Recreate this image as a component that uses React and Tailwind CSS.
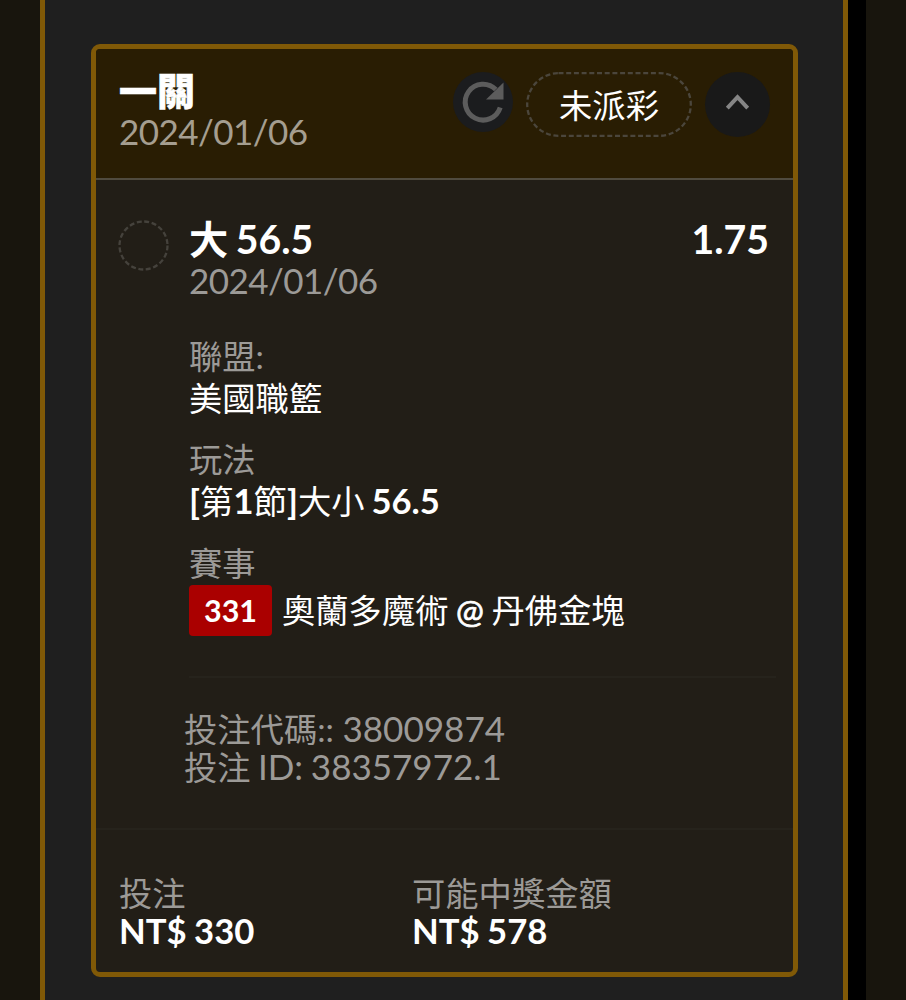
import React from 'react';

const Field = ({ label, children, className = '' }) => (
  <div className={className}>
    <div className="h-[42px] text-[33.3px] leading-[42px] text-[#9c9a97]">{label}</div>
    {children}
  </div>
);

const Amount = ({ label, value, className = '' }) => (
  <div className={className}>
    <div className="h-[38px] text-[33.3px] leading-[38px] text-[#9c9a97]">{label}</div>
    <div className="h-[38px] text-[34.7px] font-bold leading-[38px] [word-spacing:-1px]">{value}</div>
  </div>
);

const RefreshIcon = () => (
  <svg className="h-[60px] w-[60px]" viewBox="0 0 60 60">
    <path d="M47.2 35.5 A17.9 17.9 0 1 1 42.8 17.5" fill="none" stroke="#5c5c5c" strokeWidth="5" />
    <path d="M50.5 10.5 V27.5 H33 Z" fill="#5c5c5c" />
  </svg>
);

const ChevronUp = () => (
  <svg className="h-[65px] w-[65px]" viewBox="0 0 65 65">
    <path d="M22.3 36.2 L32.5 25.2 L42.7 36.2" fill="none" stroke="#858585" strokeWidth="4" />
  </svg>
);

export default function App() {
  return (
    <div className="flex h-[1000px] w-[906px] overflow-hidden whitespace-nowrap bg-[#18150d] font-['Lato','Noto_Sans_CJK_TC',sans-serif] text-white">
      <div className="ml-[40px] h-full w-[808px] border-x-[5px] border-[#805907] bg-[#1f1f1f] pl-[46px] pt-[44px]">
        <div className="h-[933px] w-[707px] overflow-hidden rounded-[9px] border-[5px] border-[#805907] bg-[#221e17]">
          <header className="flex h-[131px] items-start border-b-2 border-[#504b3f] bg-[#291d03] pl-[23px] pt-[20px]">
            <div className="w-[334px]">
              <div className="h-[42px] text-[38px] font-black leading-[42px] [-webkit-text-stroke:0.6px_white]">一關</div>
              <div className="h-[42px] text-[35px] leading-[41px] tracking-[-0.55px] text-[#a59e90]">2024/01/06</div>
            </div>
            <button className="mt-[3px] h-[60px] w-[60px] rounded-full bg-[#1b1c1e]">
              <RefreshIcon />
            </button>
            <div className="relative ml-[13px] mt-[3px] h-[65px] w-[166px] text-center text-[33.3px] leading-[67px]">
              <svg className="absolute inset-0 h-[65px] w-[166px]" viewBox="0 0 166 65">
                <rect x="1.2" y="1.2" width="163.6" height="62.6" rx="31.3" fill="none" stroke="#4b463c" strokeWidth="2.3" strokeDasharray="5 2.7" />
              </svg>
              未派彩
            </div>
            <button className="ml-[13px] mt-[3px] h-[65px] w-[65px] rounded-full bg-[#191919]">
              <ChevronUp />
            </button>
          </header>

          <section className="flex h-[650px] border-b-2 border-[#26231c] pl-[22px] pt-[38px]">
            <svg className="mt-[2px] h-[51px] w-[51px]" viewBox="0 0 51 51">
              <circle cx="25.5" cy="25.5" r="24" fill="none" stroke="#45423c" strokeWidth="2.3" strokeDasharray="5 2.54" />
            </svg>
            <div className="ml-[20px] w-[587px]">
              <div className="flex h-[42px] w-[580px] justify-between text-[39.2px] font-bold leading-[42px]">
                <span className="[word-spacing:-2px]">大 56.5</span>
                <span>1.75</span>
              </div>
              <div className="h-[42px] text-[35px] leading-[41px] tracking-[-0.55px] text-[#9c9a97]">2024/01/06</div>

              <Field label="聯盟:" className="mt-[33px]">
                <div className="h-[42px] text-[33.3px] leading-[42px]">美國職籃</div>
              </Field>
              <Field label="玩法" className="mt-[19px]">
                <div className="h-[42px] text-[33.3px] leading-[40px]">
                  <b className="text-[35px]">[</b>第<b className="text-[35px]">1</b>節<b className="text-[35px]">]</b>大小<b className="ml-[7px] text-[34.6px]">56.5</b>
                </div>
              </Field>
              <Field label="賽事" className="mt-[20px]">
                <div className="mt-[1px] flex h-[51px] items-center">
                  <span className="h-[51px] w-[83px] rounded-[4px] bg-[#aa0000] text-center text-[30.5px] font-bold leading-[51px]">331</span>
                  <span className="ml-[10px] text-[33.3px] leading-[53px] [word-spacing:-1px]">
                    奧蘭多魔術 <span className="[-webkit-text-stroke:0.7px_white]">@</span> 丹佛金塊
                  </span>
                </div>
              </Field>

              <div className="mt-[40px] h-[2px] bg-[#26231c]" />
              <div className="-ml-[5px] mt-[31px] text-[33.3px] leading-[38px] text-[#9c9a97]">
                <div className="h-[38px]">投注代碼:: <span className="text-[35.1px]">38009874</span></div>
                <div className="h-[38px] [word-spacing:-1.2px]">投注 <span className="text-[35px]">ID: 38357972.1</span></div>
              </div>
            </div>
          </section>

          <footer className="flex pl-[23px] pt-[44px]">
            <Amount label="投注" value="NT$ 330" className="w-[293px]" />
            <Amount label="可能中獎金額" value="NT$ 578" />
          </footer>
        </div>
      </div>
      <div className="h-full w-[18px] bg-black" />
    </div>
  );
}
